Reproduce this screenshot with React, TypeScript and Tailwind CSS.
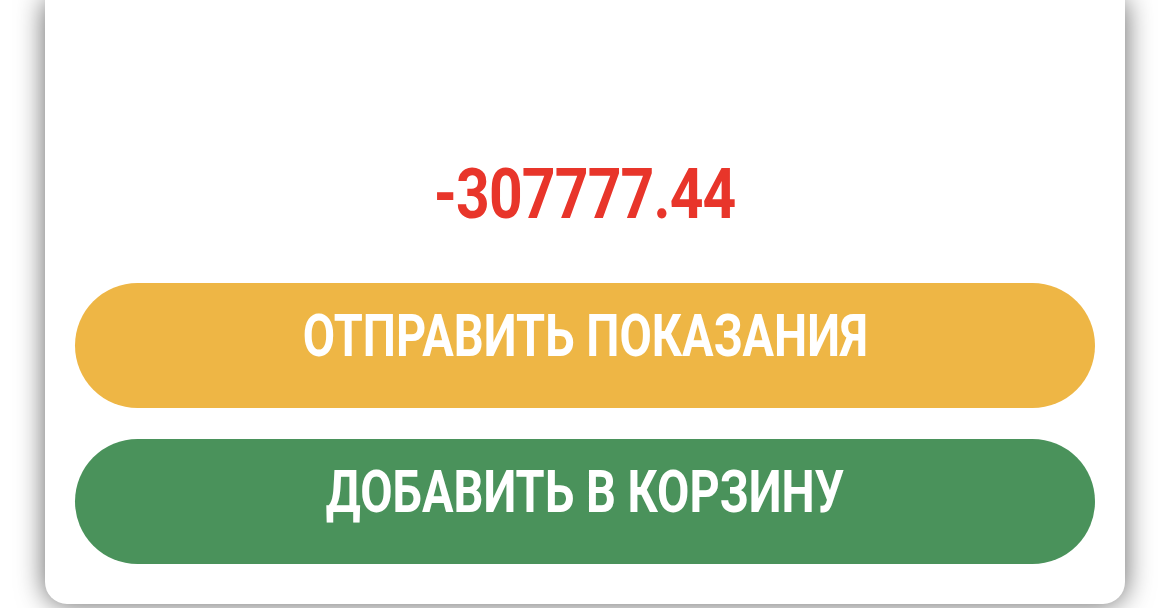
import React from "react";

export default function App() {
  return (
    <div className="w-[1170px] h-[608px] overflow-hidden bg-white px-[45px]" style={{ fontFamily: "Roboto, 'Liberation Sans', sans-serif" }}>
      <div className="h-[604px] bg-white rounded-b-[22px] shadow-[0_0_28px_rgba(0,0,0,0.62)] flex flex-col px-[30px] pt-[159px]">
        <div className="h-[70px] flex justify-center">
          <span className="inline-block text-[70px] leading-none font-bold text-[#e8352a] scale-x-[0.84] tracking-[-1px]">-307777.44</span>
        </div>
        <button className="mt-[54px] h-[125px] rounded-full bg-[#eeb645] flex items-center justify-center pb-[21px]">
          <span className="inline-block text-[59px] leading-none font-bold text-white scale-x-[0.795]">ОТПРАВИТЬ ПОКАЗАНИЯ</span>
        </button>
        <button className="mt-[31px] h-[125px] rounded-full bg-[#4a925b] flex items-center justify-center pb-[21px]">
          <span className="inline-block text-[59px] leading-none font-bold text-white scale-x-[0.795]">ДОБАВИТЬ В КОРЗИНУ</span>
        </button>
      </div>
    </div>
  );
}
